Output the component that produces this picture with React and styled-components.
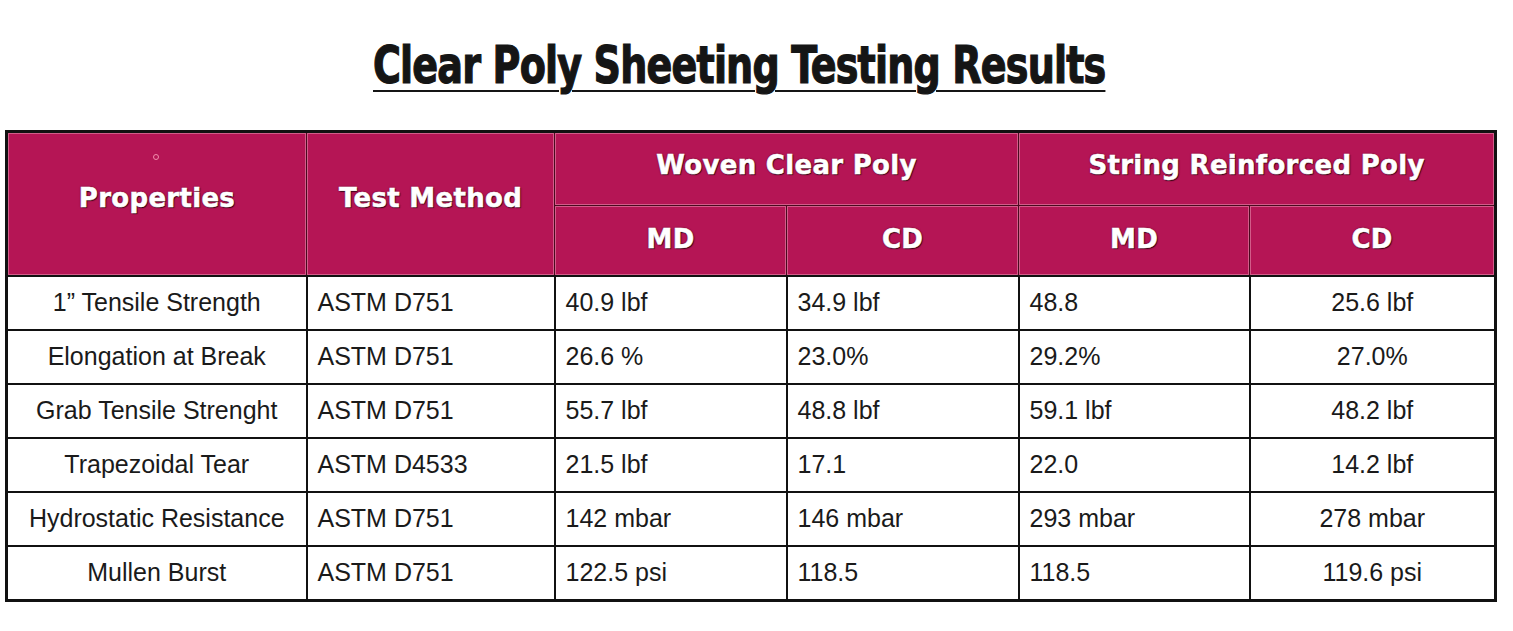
import styled, { createGlobalStyle } from 'styled-components';

const GlobalStyle = createGlobalStyle`
  body {
    margin: 0;
    background: #ffffff;
  }
`;

const columns = [300, 248, 232, 232, 231, 246];

const rows = [
  ['1\u201D Tensile Strength', 'ASTM D751', '40.9 lbf', '34.9 lbf', '48.8', '25.6 lbf'],
  ['Elongation at Break', 'ASTM D751', '26.6 %', '23.0%', '29.2%', '27.0%'],
  ['Grab Tensile Strenght', 'ASTM D751', '55.7 lbf', '48.8 lbf', '59.1 lbf', '48.2 lbf'],
  ['Trapezoidal Tear', 'ASTM D4533', '21.5 lbf', '17.1', '22.0', '14.2 lbf'],
  ['Hydrostatic Resistance', 'ASTM D751', '142 mbar', '146 mbar', '293 mbar', '278 mbar'],
  ['Mullen Burst', 'ASTM D751', '122.5 psi', '118.5', '118.5', '119.6 psi'],
];

// alignment per column: properties and last column centered, the rest left
const aligns = ['center', 'left', 'left', 'left', 'left', 'center'];

export default function App() {
  return (
    <>
      <GlobalStyle />
      <Page>
        <TitleBar>
          <Title>Clear Poly Sheeting Testing Results</Title>
        </TitleBar>

        <Table>
          <colgroup>
            {columns.map((w, i) => (
              <col key={i} style={{ width: w }} />
            ))}
          </colgroup>
          <thead>
            <tr>
              <HeadCell rowSpan={2} $kind="lift">
                <Mark />
                Properties
              </HeadCell>
              <HeadCell rowSpan={2} $kind="lift">Test Method</HeadCell>
              <HeadCell colSpan={2} $kind="group">Woven Clear Poly</HeadCell>
              <HeadCell colSpan={2} $kind="group">String Reinforced Poly</HeadCell>
            </tr>
            <tr>
              <HeadCell $kind="sub">MD</HeadCell>
              <HeadCell $kind="sub">CD</HeadCell>
              <HeadCell $kind="sub">MD</HeadCell>
              <HeadCell $kind="sub">CD</HeadCell>
            </tr>
          </thead>
          <tbody>
            {rows.map((row, r) => (
              <tr key={r}>
                {row.map((value, c) => (
                  <Cell key={c} $align={aligns[c]}>
                    {value}
                  </Cell>
                ))}
              </tr>
            ))}
          </tbody>
        </Table>
      </Page>
    </>
  );
}

const Page = styled.div`
  width: 1513px;
  height: 631px;
  background: #ffffff;
  overflow: hidden;
`;

const TitleBar = styled.div`
  height: 130px;
  display: flex;
  justify-content: center;
  padding-right: 35px;
  box-sizing: border-box;
`;

const Title = styled.h1`
  margin: 0;
  padding-top: 38px;
  font-family: 'Liberation Sans Narrow', 'DejaVu Sans Condensed', 'Liberation Sans', sans-serif;
  font-weight: 700;
  font-size: 51px;
  line-height: 56px;
  letter-spacing: -1px;
  color: #151515;
  -webkit-text-stroke: 1.2px #151515;
  transform: scaleX(0.83);
  text-decoration: underline;
  text-decoration-thickness: 2px;
  text-underline-offset: 7px;
`;

const Table = styled.table`
  margin-left: 5px;
  width: 1489px;
  table-layout: fixed;
  border-collapse: collapse;
  border: 3px solid #111111;
`;

const headPadding = {
  lift: '0 0 12px',
  group: '0 0 8px',
  sub: '0 0 4px',
};

const headHeight = {
  lift: 'auto',
  group: '64px',
  sub: '65px',
};

const HeadCell = styled.th`
  position: relative;
  background: #b51555;
  color: #ffffff;
  font-family: 'DejaVu Sans', 'Liberation Sans', sans-serif;
  font-weight: 700;
  font-size: 26px;
  letter-spacing: 0.3px;
  text-align: center;
  text-shadow: 1px 1px 1px #2e0312, 0 0 2px #4d0620;
  -webkit-text-stroke: 0.5px #ffffff;
  border: 1.5px solid #4a0a1f;
  box-shadow: inset 0 0 0 1px rgba(255, 200, 215, 0.4);
  height: ${({ $kind }) => headHeight[$kind]};
  padding: ${({ $kind }) => headPadding[$kind]};
`;

const Mark = styled.span`
  position: absolute;
  left: 145px;
  top: 21px;
  width: 4px;
  height: 4px;
  border-radius: 50%;
  border: 1.5px solid #f28cab;
`;

const Cell = styled.td`
  height: 50px;
  border: 2px solid #111111;
  font-family: 'Liberation Sans', Arial, sans-serif;
  font-size: 25px;
  color: #1a1a1a;
  text-align: ${({ $align }) => $align};
  padding: ${({ $align }) => ($align === 'left' ? '0 0 2px 10px' : '0 0 2px')};
  white-space: nowrap;
`;
